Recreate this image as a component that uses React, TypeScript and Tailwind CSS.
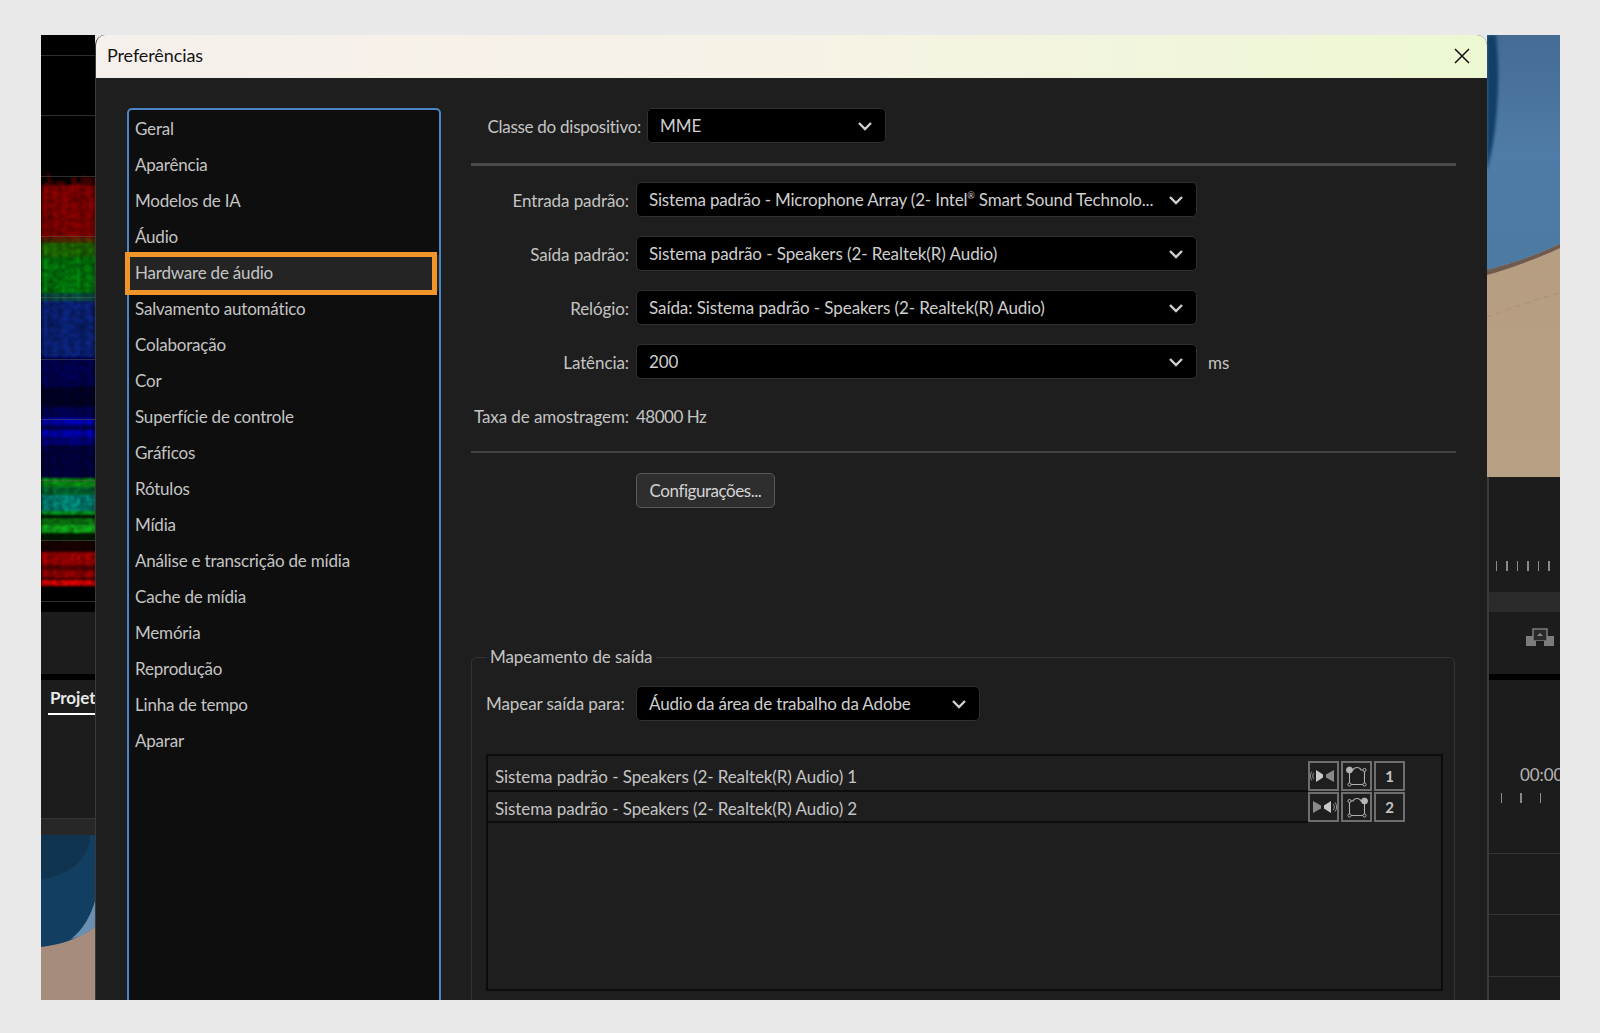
import React from "react";

const NAV = ["Geral","Aparência","Modelos de IA","Áudio","Hardware de áudio","Salvamento automático","Colaboração","Cor","Superfície de controle","Gráficos","Rótulos","Mídia","Análise e transcrição de mídia","Cache de mídia","Memória","Reprodução","Linha de tempo","Aparar"];

function Chevron() {
  return (
    <svg width="16" height="10" viewBox="0 0 16 10" className="shrink-0">
      <path d="M2 2l6 6 6-6" fill="none" stroke="#d0d0d0" strokeWidth="2.4" />
    </svg>
  );
}

function Select({ text, className }: { text: React.ReactNode; className: string }) {
  return (
    <div className={"flex h-[35px] shrink-0 items-center justify-between rounded-[5px] border border-[#303030] bg-black pl-[12px] pr-[12px] text-[#cfcfcf] " + className}>
      <span className="truncate">{text}</span>
      <Chevron />
    </div>
  );
}

function Scope() {
  const bands: [number, number, number, number, number][] = [
    [136, 150, 70, 0, 0],[150, 203, 135, 0, 0],[203, 208, 80, 50, 0],[208, 222, 30, 110, 0],[222, 258, 0, 125, 10],[258, 266, 10, 80, 70],[266, 322, 10, 35, 125],
    [322, 352, 0, 0, 85],[352, 372, 0, 0, 40],[372, 383, 0, 0, 90],[383, 390, 0, 0, 185],[390, 395, 0, 0, 90],[395, 402, 0, 0, 190],[402, 410, 0, 0, 130],[410, 443, 0, 0, 65],
    [443, 452, 10, 150, 20],[452, 460, 0, 110, 50],[460, 476, 0, 140, 125],[476, 480, 0, 150, 30],[480, 483, 0, 15, 0],[483, 490, 10, 120, 15],[490, 498, 15, 175, 25],[498, 506, 0, 25, 0],[506, 517, 25, 0, 0],
    [517, 530, 170, 0, 0],[530, 535, 90, 0, 0],[535, 543, 150, 0, 0],[543, 545, 50, 0, 0],[545, 551, 235, 0, 0],
  ];
  const cells: React.ReactNode[] = [];
  let s = 7;
  const rnd = () => { s = (s * 16807) % 2147483647; return s / 2147483647; };
  const colNoise = Array.from({ length: 20 }, () => 0.75 + rnd() * 0.35);
  const topEdge = Array.from({ length: 20 }, () => 136 + rnd() * 14);
  for (const [a, b, r, g, bl] of bands) {
    for (let y = a; y < b; y += 2) {
      for (let x = 0; x < 57; x += 3) {
        if (y < topEdge[x / 3]) continue;
        const k = colNoise[x / 3] * (0.65 + rnd() * 0.5);
        cells.push(<rect key={y + "-" + x} x={x} y={y} width="3" height="2" fill={`rgb(${Math.round(r * k)},${Math.round(g * k)},${Math.round(bl * k)})`} />);
      }
    }
  }
  return (
    <svg className="block h-[577px] w-[54px] shrink-0 bg-black" viewBox="0 0 54 577" preserveAspectRatio="none">
      <g style={{ filter: "blur(1.1px)" }}>{cells}</g>
      {[20, 80, 141, 201, 262, 324, 384, 445, 505, 566].map((y) => (
        <rect key={y} x="0" y={y} width="54" height="1" fill="#5a5a5a" opacity="0.5" />
      ))}
    </svg>
  );
}

function Photo() {
  return (
    <svg className="block h-[442px] w-[73px] shrink-0" viewBox="0 0 73 442" preserveAspectRatio="none">
      <defs>
        <linearGradient id="pb" x1="0" y1="0" x2="0" y2="1">
          <stop offset="0" stopColor="#446b93" />
          <stop offset="0.5" stopColor="#4f7ca6" />
          <stop offset="1" stopColor="#4d7aa3" />
        </linearGradient>
        <linearGradient id="ps" x1="0" y1="0" x2="0" y2="1">
          <stop offset="0" stopColor="#b49b7e" />
          <stop offset="1" stopColor="#b8a084" />
        </linearGradient>
      </defs>
      <rect width="73" height="442" fill="url(#ps)" />
      <path d="M0 0H73V209C45 222 20 230 0 235Z" fill="url(#pb)" />
      <path d="M0 0H9C14 45 10 100 0 135Z" fill="#123f68" style={{ filter: "blur(1.5px)" }} />
      <path d="M0 235C20 230 45 222 73 209V213C45 226 20 234 0 240Z" fill="#6e5a4e" />
      <path d="M0 282C20 275 45 265 73 258" fill="none" stroke="#8f7660" strokeWidth="0.7" strokeDasharray="6 4" opacity="0.5" />
    </svg>
  );
}

function Thumb() {
  return (
    <svg className="block h-[165px] w-[54px] shrink-0" viewBox="0 0 54 165" preserveAspectRatio="none">
      <rect width="54" height="165" fill="#a68c7c" />
      <path d="M0 0H54V92C35 105 18 110 0 112Z" fill="#123f61" />
      <path d="M0 0H49C51 10 40 40 0 44Z" fill="#10344f" />
      <path d="M54 66V92C45 99 38 102 30 104C42 95 50 80 54 66Z" fill="#6a8fb0" />
    </svg>
  );
}

function SpeakerIcon({ right }: { right: boolean }) {
  return (
    <svg width="27" height="14" viewBox="0 0 27 14">
      <g transform={right ? "translate(27,0) scale(-1,1)" : undefined}>
        <path d="M6 1l7 4.500v3l-7 4.500z" fill="#c8c8c8" />
        <path d="M24 1l-8 4.500v3l8 4.500z" fill="#8a8a8a" />
        <path d="M4 4a4 4 0 0 0 0 6M2 2.500a7 7 0 0 0 0 9" fill="none" stroke="#a0a0a0" strokeWidth="0.9" />
      </g>
    </svg>
  );
}

function NodeIcon({ right }: { right: boolean }) {
  return (
    <svg width="22" height="22" viewBox="0 0 22 22">
      <path d="M3.500 5H7Q8 2.500 11 2.500T15 5H18.500V19.500H3.500Z" fill="none" stroke="#b0b0b0" strokeWidth="1.100" />
      <circle cx="3.500" cy="5" r={right ? 1.600 : 3} fill={right ? "#1d1d1d" : "#b8b8b8"} stroke="#b0b0b0" />
      <circle cx="18.500" cy="5" r={right ? 3 : 1.600} fill={right ? "#b8b8b8" : "#1d1d1d"} stroke="#b0b0b0" />
      <circle cx="3.500" cy="19.500" r="1.600" fill="#1d1d1d" stroke="#b0b0b0" />
      <circle cx="18.500" cy="19.500" r="1.600" fill="#1d1d1d" stroke="#b0b0b0" />
    </svg>
  );
}

function Cell({ children }: { children: React.ReactNode }) {
  return <div className="flex h-[30px] w-[31px] items-center justify-center border-2 border-[#6e6e6e] text-[15px] font-bold text-[#c4c4c4]">{children}</div>;
}

function MapRow({ n }: { n: 1 | 2 }) {
  return (
    <div className="mr-[36px] flex h-[31px] items-stretch">
      <div className={"flex flex-1 items-center border-b-2 border-[#0c0c0c] pl-[7px] " + (n === 2 ? "pt-[4px]" : "pt-[2px]")}>Sistema padrão - Speakers (2- Realtek(R) Audio) {n}</div>
      <div className="flex gap-[2px]">
        <Cell><SpeakerIcon right={n === 2} /></Cell>
        <Cell><NodeIcon right={n === 2} /></Cell>
        <Cell>{n}</Cell>
      </div>
    </div>
  );
}

function Field({ label, text, suffix }: { label: string; text: React.ReactNode; suffix?: string }) {
  return (
    <div className="flex h-[35px] items-center">
      <div className="w-[158px] shrink-0 pt-[2px] text-right">{label}</div>
      <Select text={text} className="ml-[7px] w-[561px]" />
      {suffix && <div className="ml-[11px] pt-[2px]">{suffix}</div>}
    </div>
  );
}

function Ticks({ xs }: { xs: number[] }) {
  return (
    <svg className="block h-[10px] w-[72px]" viewBox="0 0 72 10">
      {xs.map((x, i) => <rect key={x} x={x} y="0" width={i % 2 ? 2 : 1} height="10" fill="#8a8a8a" />)}
    </svg>
  );
}

export default function App() {
  return (
    <div className="h-[1033px] w-[1600px] overflow-hidden bg-[#e9e9e9] pl-[41px] pt-[35px] font-['Lato',sans-serif] text-[17px] tracking-[-0.08px] text-[#c4c4c4]">
      <div className="flex h-[965px] w-[1519px] overflow-hidden">
        {/* left backdrop */}
        <div className="flex w-[54px] shrink-0 flex-col overflow-hidden bg-[#1c1c1c]">
          <Scope />
          <div className="h-[62px] bg-[#1c1c1c]" />
          <div className="h-[6px] bg-black" />
          <div className="h-[138px] shrink-0 overflow-hidden pl-[7px] pt-[6px]">
            <div className="w-[60px] whitespace-nowrap border-b-2 border-white pb-[3px] pl-[2px] text-[17px] font-bold leading-[24px] text-[#e8e8e8]">Projeto</div>
          </div>
          <div className="h-[17px] border-t border-[#333] bg-[#272727]" />
          <Thumb />
        </div>

        {/* dialog */}
        <div className="w-[1392px] shrink-0 overflow-hidden rounded-t-[10px] border-l border-[#3a3a3a] bg-[#1e1e1e]">
          <div className="flex h-[43px] items-center justify-between bg-gradient-to-r from-[#f6f0ec] via-[#f7f2e6] to-[#ecf8d2] pb-[2px] pl-[11px] pr-[15px] text-[18px] tracking-[-0.1px] text-[#141414]">
            <span>Preferências</span>
            <svg width="20" height="20" viewBox="0 0 20 20"><path d="M3 3l14 14M17 3L3 17" fill="none" stroke="#111" strokeWidth="1.500" /></svg>
          </div>
          <div className="flex pl-[31px] pt-[30px]">
            {/* nav */}
            <div className="h-[900px] w-[314px] shrink-0 rounded-t-[5px] border-2 border-[#4a85c5] bg-[#0e0e0e] pt-[1px] tracking-[-0.2px]">
              {NAV.map((n) => (
                <div key={n} className={"relative flex h-[36px] items-center pl-[6px] " + (n === "Hardware de áudio" ? "bg-[#242424]" : "")}>
                  {n}
                  {n === "Hardware de áudio" && <div className="absolute left-[-4px] right-[2px] top-[-3px] h-[43px] border-[5px] border-[#f0952a]" />}
                </div>
              ))}
            </div>

            {/* content */}
            <div className="ml-[30px] w-[985px] shrink-0">
              <div className="flex h-[35px] items-center">
                <div className="w-[170px] shrink-0 pt-[2px] text-right tracking-[-0.27px]">Classe do dispositivo:</div>
                <Select text="MME" className="ml-[6px] w-[239px]" />
              </div>
              <div className="mt-[20px] h-[3px] bg-[#4a4a4a]" />
              <div className="mt-[16px] flex flex-col gap-[19px]">
                <Field label="Entrada padrão:" text={<span className="tracking-[-0.18px]">Sistema padrão - Microphone Array (2- Intel<span className="align-super text-[9px] leading-[0]">®</span> Smart Sound Technolo...</span>} />
                <Field label="Saída padrão:" text="Sistema padrão - Speakers (2- Realtek(R) Audio)" />
                <Field label="Relógio:" text="Saída: Sistema padrão - Speakers (2- Realtek(R) Audio)" />
                <Field label="Latência:" text="200" suffix="ms" />
              </div>
              <div className="mt-[26px] flex h-[24px] items-center">
                <div className="w-[158px] shrink-0 text-right">Taxa de amostragem:</div>
                <div className="ml-[7px] tracking-[-0.5px]">48000 Hz</div>
              </div>
              <div className="mt-[22px] h-[2px] bg-[#424242]" />
              <div className="ml-[165px] mt-[20px] flex h-[35px] w-[139px] items-center justify-center rounded-[5px] border border-[#5a5a5a] bg-[#2e2e2e] tracking-[-0.45px] text-[#d4d4d4]">Configurações...</div>

              <fieldset className="mr-[1px] mt-[137px] h-[400px] rounded-[6px] border border-[#333] pl-[14px]">
                <legend className="ml-[1px] px-[3px] leading-[24px]">Mapeamento de saída</legend>
                <div className="mt-[17px] flex h-[35px] items-center">
                  <div className="w-[136px] shrink-0 whitespace-nowrap">Mapear saída para:</div>
                  <Select text={<span className="tracking-[-0.14px]">Áudio da área de trabalho da Adobe</span>} className="ml-[14px] w-[344px]" />
                </div>
                <div className="mt-[33px] h-[237px] w-[957px] border-2 border-[#0c0c0c] pt-[5px]">
                  <MapRow n={1} />
                  <MapRow n={2} />
                </div>
              </fieldset>
            </div>
          </div>
        </div>

        {/* right backdrop */}
        <div className="flex w-[73px] shrink-0 flex-col">
          <Photo />
          <div className="flex flex-1 flex-col border-l-2 border-[#3a3a3a] bg-[#1c1c1c]">
            <div className="flex h-[115px] flex-col justify-end pb-[21px]">
              <Ticks xs={[7, 17, 28, 38, 49, 59]} />
            </div>
            <div className="h-[20px] bg-[#2b2b2b]" />
            <div className="flex h-[62px] items-start justify-end pr-[6px] pt-[16px]">
              <svg width="28" height="18" viewBox="0 0 28 18">
                <rect x="0" y="8" width="28" height="10" fill="#7c7c7c" />
                <rect x="7" y="1" width="14" height="12" fill="#2a2a2a" stroke="#7c7c7c" strokeWidth="1.500" />
                <rect x="10" y="13" width="8" height="5" fill="#1c1c1c" />
                <path d="M11 8l3-3 3 3z" fill="#8a8a8a" />
              </svg>
            </div>
            <div className="h-[6px] bg-black" />
            <div className="flex h-[173px] flex-col overflow-hidden pl-[31px] pt-[83px] text-[17px] text-[#b4b4b4]">
              <div className="w-[60px] leading-[24px]">00:00</div>
              <div className="ml-[-31px] mt-[6px]"><Ticks xs={[12, 31, 51]} /></div>
            </div>
            <div className="h-[61px] border-t border-[#333]" />
            <div className="h-[62px] border-t border-[#333]" />
            <div className="flex-1 border-t border-[#333]" />
          </div>
        </div>
      </div>
    </div>
  );
}
